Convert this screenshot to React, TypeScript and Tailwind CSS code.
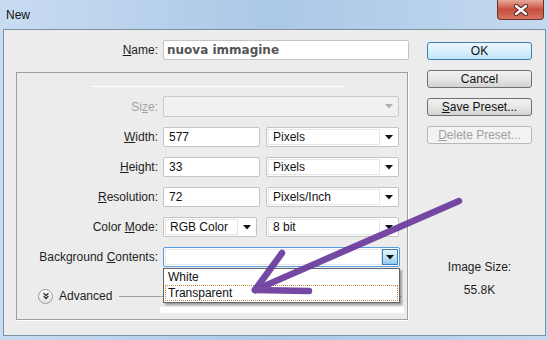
import React from 'react';
import { ChevronsDown } from 'lucide-react';

const font = "font-['Liberation_Sans',Arial,sans-serif]";

function Caret({ light }: { light?: boolean }) {
  return (
    <svg width="8" height="5" viewBox="0 0 8 5" className="shrink-0">
      <path d="M0 0 H8 L4 4.5 Z" fill={light ? '#b0b0b0' : '#111'} />
    </svg>
  );
}

function Label({ children, disabled }: { children: React.ReactNode; disabled?: boolean }) {
  return (
    <div className={`w-[141px] text-right text-[12px] leading-[14px] ${disabled ? 'text-[#a3a3a3]' : 'text-[#1e1e1e]'}`}>
      {children}
    </div>
  );
}

function TextBox({ value, w }: { value: string; w: string }) {
  return (
    <div className={`${w} h-full bg-white border border-[#c4c4c4] rounded-[2px] pl-[5px] flex items-center text-[12px] text-[#111]`}>
      {value}
    </div>
  );
}

function Combo({ value, w }: { value: string; w: string }) {
  return (
    <div className={`${w} h-full bg-white border border-[#c4c4c4] rounded-[2px] flex items-center p-[1px]`}>
      <div className="flex-1 h-full border border-[#e6e6e6] pl-[4px] flex items-center text-[12px] text-[#111]">
        {value}
      </div>
      <div className="w-[17px] flex justify-center">
        <Caret />
      </div>
    </div>
  );
}

function Btn({ children, primary, disabled }: { children: React.ReactNode; primary?: boolean; disabled?: boolean }) {
  const look = disabled
    ? 'border-[#b5b8bb] bg-[#f3f3f3] text-[#a0a0a0]'
    : primary
      ? 'border-[#3c7fb1] bg-gradient-to-b from-[#eaf6fd] via-[#d9effa] to-[#bee6fd] text-[#111]'
      : 'border-[#707070] bg-gradient-to-b from-[#f2f2f2] via-[#e6e6e6] to-[#d2d2d2] text-[#111]';
  return (
    <div className={`h-[18px] rounded-[3px] border flex items-center justify-center text-[12px] ${look}`}>
      {children}
    </div>
  );
}

export default function App() {
  return (
    <div className={`relative w-[548px] h-[340px] overflow-hidden bg-gradient-to-r from-[#c8dcf1] via-[#abc8e7] to-[#c3d9ef] ${font}`}>
      {/* title bar */}
      <div className="h-[29px] flex justify-between">
        <div className="pl-[6px] flex items-center text-[12px] text-[#111]">New</div>
        <div className="mr-[4px] w-[47px] h-[20px] rounded-b-[4px] border border-t-0 border-[#6e3226] bg-gradient-to-b from-[#e9a99a] via-[#c84f3d] to-[#d87262] flex items-center justify-center">
          <svg width="16" height="12" viewBox="0 0 16 12">
            <path d="M3 2 L13 10 M13 2 L3 10" stroke="#4a2018" strokeWidth="4.2" strokeLinecap="round" />
            <path d="M3 2 L13 10 M13 2 L3 10" stroke="#fff" strokeWidth="2.4" strokeLinecap="round" />
          </svg>
        </div>
      </div>

      {/* client area */}
      <div className="ml-[3px] w-[543px] h-[307px] border border-[#7f90a2] bg-[#ececec] flex">
        <div className="w-[413px]">
          <div className="pt-[10px] flex items-center h-[30px]">
            <div className="w-[154px] text-right text-[12px] text-[#1e1e1e]">
              <span className="underline">N</span>ame:
            </div>
            <div className="ml-[5px] w-[246px] h-[20px] bg-white border border-[#c4c4c4] rounded-[2px] pl-[3px] flex items-center font-['DejaVu_Sans',sans-serif] font-bold text-[12px] text-[#555]">
              nuova immagine
            </div>
          </div>

          <div className="relative ml-[12px] mt-[12px] w-[392px] border border-[#a0a0a0] shadow-[1px_1px_0_#ffffff] pb-[6px]">
            <div className="ml-[75px] w-[253px] h-px bg-white mt-[13px]" />

            <div className="mt-[9px] h-[21px] flex items-center gap-[5px]">
              <Label disabled>
                Si<span className="underline">z</span>e:
              </Label>
              <div className="w-[236px] h-full bg-[#f1f1f1] border border-[#c8c8c8] rounded-[2px] flex items-center justify-end pr-[5px]">
                <Caret light />
              </div>
            </div>

            <div className="mt-[10px] h-[20px] flex items-center gap-[5px]">
              <Label>
                <span className="underline">W</span>idth:
              </Label>
              <TextBox value="577" w="w-[97px]" />
              <div className="ml-[1px] h-full">
                <Combo value="Pixels" w="w-[133px]" />
              </div>
            </div>

            <div className="mt-[10px] h-[20px] flex items-center gap-[5px]">
              <Label>
                <span className="underline">H</span>eight:
              </Label>
              <TextBox value="33" w="w-[97px]" />
              <div className="ml-[1px] h-full">
                <Combo value="Pixels" w="w-[133px]" />
              </div>
            </div>

            <div className="mt-[10px] h-[20px] flex items-center gap-[5px]">
              <Label>
                <span className="underline">R</span>esolution:
              </Label>
              <TextBox value="72" w="w-[97px]" />
              <div className="ml-[1px] h-full">
                <Combo value="Pixels/Inch" w="w-[133px]" />
              </div>
            </div>

            <div className="mt-[10px] h-[20px] flex items-center gap-[5px]">
              <Label>
                Color <span className="underline">M</span>ode:
              </Label>
              <Combo value="RGB Color" w="w-[94px]" />
              <div className="ml-[4px] h-full">
                <Combo value="8 bit" w="w-[133px]" />
              </div>
            </div>

            <div className="mt-[10px] h-[20px] flex items-center gap-[5px]">
              <Label>
                Background <span className="underline">C</span>ontents:
              </Label>
              <div className="w-[237px] h-full bg-white border border-[#569de5] rounded-[2px] flex p-[1px]">
                <div className="flex-1 border border-[#e6e6e6]" />
                <div className="w-[16px] border border-[#3c7fb1] bg-gradient-to-b from-[#e5f4fc] via-[#c4e5f6] to-[#8fcaea] flex items-center justify-center">
                  <Caret />
                </div>
              </div>
            </div>

            <div className="mt-[21px] h-[16px] flex items-center">
              <div className="ml-[21px] w-[15px] h-[15px] rounded-full border border-[#9a9a9a] bg-gradient-to-b from-white to-[#e2e2e2] flex items-center justify-center">
                <ChevronsDown size={10} strokeWidth={3} color="#222" />
              </div>
              <div className="ml-[6px] text-[12px] text-[#1e1e1e]">Advanced</div>
              <div className="ml-[7px] flex-1 mr-[6px] h-px bg-[#a0a0a0]" />
            </div>

            <div className="mt-[3px] ml-[143px] w-[244px] h-[6px] bg-white" />

            {/* open dropdown list */}
            <div className="absolute left-[146px] top-[195px] w-[237px] h-[35px] bg-white border border-[#646464] shadow-[2px_2px_2px_rgba(0,0,0,0.35)] text-[12px] text-[#111]">
              <div className="h-[16px] pl-[4px] flex items-center">White</div>
              <div className="mx-[1px] h-[16px] pl-[2px] flex items-center border border-dotted border-[#c8843c]">
                Transparent
              </div>
            </div>
          </div>
        </div>

        <div className="ml-[10px] w-[105px] pt-[12px] flex flex-col">
          <Btn primary>OK</Btn>
          <div className="mt-[10px]">
            <Btn>Cancel</Btn>
          </div>
          <div className="mt-[10px]">
            <Btn>
              <span className="underline">S</span>ave Preset...
            </Btn>
          </div>
          <div className="mt-[10px]">
            <Btn disabled>
              <span className="underline">D</span>elete Preset...
            </Btn>
          </div>
          <div className="mt-[116px] text-center text-[12px] leading-[14px] text-[#1e1e1e]">Image Size:</div>
          <div className="mt-[9px] text-center text-[12px] leading-[14px] text-[#1e1e1e]">55.8K</div>
        </div>
      </div>

      {/* purple annotation arrow */}
      <svg className="absolute inset-0 pointer-events-none" width="548" height="340" viewBox="0 0 548 340">
        <g stroke="#6a3a9c" strokeWidth="6.5" strokeLinecap="round" strokeLinejoin="round" fill="none" opacity="0.92">
          <path d="M459 201 L255 290" />
          <path d="M282 253 L255 290" />
          <path d="M255 290 L309 291" />
        </g>
      </svg>
    </div>
  );
}
